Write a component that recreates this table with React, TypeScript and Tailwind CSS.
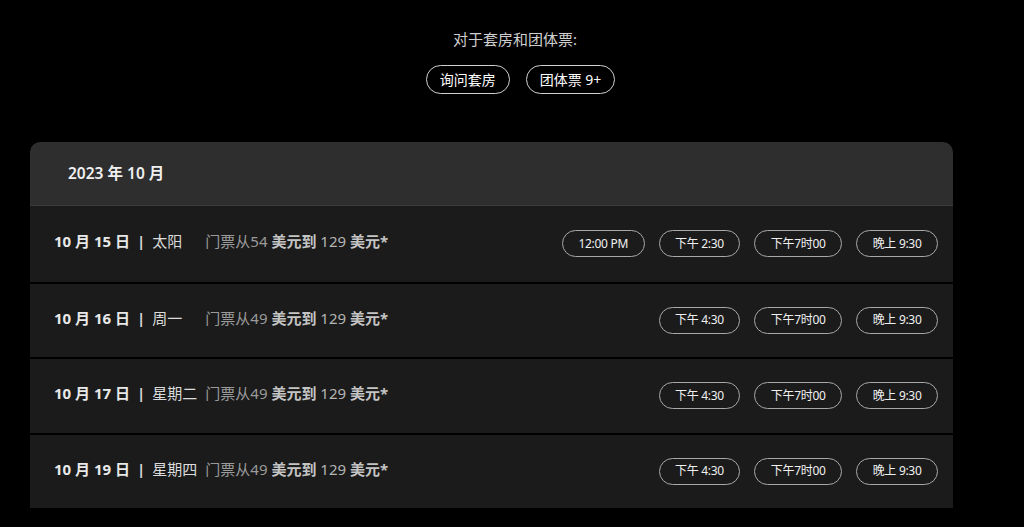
import React from 'react';

const FONT = { fontFamily: '"Noto Sans", "Noto Sans CJK SC", sans-serif' };

interface Show {
  date: string;
  day: string;
  from: string;
  times: string[];
}

const SHOWS: Show[] = [
  { date: '10 月 15 日', day: '太阳', from: '54', times: ['12:00 PM', '下午 2:30', '下午7时00', '晚上 9:30'] },
  { date: '10 月 16 日', day: '周一', from: '49', times: ['下午 4:30', '下午7时00', '晚上 9:30'] },
  { date: '10 月 17 日', day: '星期二', from: '49', times: ['下午 4:30', '下午7时00', '晚上 9:30'] },
  { date: '10 月 19 日', day: '星期四', from: '49', times: ['下午 4:30', '下午7时00', '晚上 9:30'] },
];

function ShowRow({ show, first }: { show: Show; first: boolean }) {
  return (
    <div
      className={
        first
          ? 'flex h-[75.5px] items-center justify-between bg-[#1b1b1b] pl-[24px] pr-[15px]'
          : 'flex h-[75.5px] items-center justify-between border-t-2 border-black bg-[#1b1b1b] pl-[24px] pr-[15px]'
      }
    >
      <div className="mb-[5px] flex items-center text-[15px] leading-5">
        <span className="font-bold text-[#e8e8e8]">{show.date}</span>
        <span className="mx-[7px] font-bold text-[#d8d8d8]">|</span>
        <span className="w-[53px] whitespace-nowrap text-[#dcdcdc]">{show.day}</span>
        <span className="text-[#9a9a9a]">
          门票从{show.from} <span className="font-bold text-[#c4c4c4]">美元到</span>{' '}
          <span className="text-[#b4b4b4]">129</span>{' '}
          <span className="font-bold text-[#c4c4c4]">美元*</span>
        </span>
      </div>
      <div className="flex items-center gap-[14px]">
        {show.times.map((t) => (
          <button
            key={t}
            type="button"
            className="h-[27px] whitespace-nowrap rounded-full border-[1.5px] border-[#a8a8a8] px-[15.5px] text-[12px] tracking-[-0.3px] text-[#f0f0f0]"
          >
            {t}
          </button>
        ))}
      </div>
    </div>
  );
}

export default function App() {
  return (
    <div className="min-h-screen bg-black pt-[29px]" style={FONT}>
      <p className="pl-[6px] text-center text-[15px] leading-5 text-[#cfcfcf]">对于套房和团体票:</p>
      <div className="mt-[16px] flex justify-center gap-[16px] pl-[17px]">
        <button
          type="button"
          className="h-[29px] rounded-full border-[1.5px] border-[#d0d0d0] px-[13px] text-[14px] text-white"
        >
          询问套房
        </button>
        <button
          type="button"
          className="h-[29px] rounded-full border-[1.5px] border-[#d0d0d0] px-[13px] text-[14px] text-white"
        >
          团体票 9+
        </button>
      </div>

      <div className="ml-[30px] mt-[48px] w-[923px] overflow-hidden rounded-t-[10px]">
        <div className="flex h-[64px] items-center border-b border-[#3a3a3a] bg-[#2e2e2e] pl-[38px]">
          <span className="text-[15.5px] font-semibold text-[#f0f0f0]">2023 年 10 月</span>
        </div>
        <div>
          {SHOWS.map((s, i) => (
            <ShowRow key={s.date} show={s} first={i === 0} />
          ))}
        </div>
      </div>
    </div>
  );
}
